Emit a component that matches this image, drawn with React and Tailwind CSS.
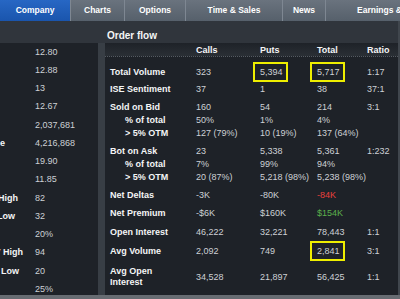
import React from 'react'

const tabs = [
  { name: 'Company', w: 'w-[70px] justify-center', active: true },
  { name: 'Charts', w: 'w-[54px] justify-center' },
  { name: 'Options', w: 'w-[61px] justify-center' },
  { name: 'Time & Sales', w: 'w-[97px] justify-center' },
  { name: 'News', w: 'w-[43px] justify-center' },
  { name: 'Earnings & Dividends', w: 'w-[160px] justify-start pl-[31px]' },
]

// left quote panel, labels are scrolled off to the left
const quote = [
  { label: '', value: '12.80' },
  { label: '', value: '12.88' },
  { label: '', value: '13' },
  { label: '', value: '12.67' },
  { label: '', value: '2,037,681' },
  { label: 'Avg Volume', pad: 'pr-[30px]', value: '4,216,868' },
  { label: '', value: '19.90' },
  { label: '', value: '11.85' },
  { label: '52 Wk High', pad: 'pr-[17px]', value: '82' },
  { label: '52 Wk Low', pad: 'pr-[20px]', value: '32' },
  { label: '', value: '20%' },
  { label: 'IV High', pad: 'pr-[12px]', value: '94' },
  { label: 'IV Low', pad: 'pr-[16px]', value: '20' },
  { label: '', value: '25%' },
]

const Box = ({ children }) => (
  <span className="inline-flex items-center h-[20px] w-[35px] -ml-[7px] pl-[5px] border-2 border-[#eeee00]">
    {children}
  </span>
)

const Row = ({ label, cells, sub, h = 'h-[18.25px]', color }) => (
  <div className={`grid grid-cols-[86px_64px_57px_50px_1fr] items-center ${h}`}>
    <div className={`font-bold text-[#f4f5f6] whitespace-nowrap ${sub ? 'pl-[15px]' : ''}`}>{label}</div>
    {cells.map((c, i) => (
      <div key={i} className={`whitespace-nowrap ${i === 2 && color ? color : 'text-[#cdd1d5]'}`}>{c}</div>
    ))}
  </div>
)

export default function App() {
  return (
    <div
      className="w-[400px] h-[299px] overflow-hidden flex flex-col bg-[#30353c] text-[9px] leading-[11px]"
      style={{ fontFamily: '"Liberation Sans", Arial, sans-serif' }}
    >
      {/* ================= TABS ================= */}
      <div className="h-[21px] flex shrink-0 overflow-hidden">
        {tabs.map(t => (
          <div
            key={t.name}
            className={`${t.w} shrink-0 h-full flex items-center font-bold text-[8.5px] whitespace-nowrap text-white ${
              t.active
                ? 'bg-gradient-to-b from-[#2767c4] to-[#1a55ad]'
                : 'bg-gradient-to-b from-[#6a737e] to-[#56606b] border-l border-[#7e8792] text-[#eef0f2]'
            }`}
          >
            {t.name}
          </div>
        ))}
      </div>

      <div className="flex-1 flex min-h-0">
        {/* ================= LEFT PANEL ================= */}
        <div className="w-[98px] shrink-0 mt-[22px] bg-[#1e2228] overflow-hidden">
          {quote.map((q, i) => (
            <div key={i} className="h-[18.25px] flex items-center">
              <div className="w-[35px] shrink-0 flex justify-end overflow-hidden">
                {q.label && <span className={`font-bold text-[#f4f5f6] whitespace-nowrap ${q.pad}`}>{q.label}</span>}
              </div>
              <span className="text-[#cdd1d5] whitespace-nowrap">{q.value}</span>
            </div>
          ))}
        </div>

        <div className="w-[7px] shrink-0 mt-[22px] bg-[#383e45]" />

        {/* ================= ORDER FLOW ================= */}
        <div className="flex-1 flex flex-col min-w-0">
          <div className="h-[22px] shrink-0 flex items-center pl-[2px] pt-[6px] font-bold text-[10px] text-[#f4f5f6]">Order flow</div>
          <div className="flex-1 bg-[#1e2228] pl-[5px] overflow-hidden">
            <div className="grid grid-cols-[86px_64px_57px_50px_1fr] h-[14px] pt-[2px] items-center font-bold text-[#f4f5f6] border-b border-dotted border-[#555b62] -ml-[5px] pl-[5px] bg-gradient-to-b from-[#1e2228] to-[#2a2f35]">
              <div />
              <div>Calls</div>
              <div>Puts</div>
              <div>Total</div>
              <div>Ratio</div>
            </div>
            <div className="pt-[5px]">
              <Row label="Total Volume" cells={['323', <Box>5,394</Box>, <Box>5,717</Box>, '1:17']} />
              <Row label="ISE Sentiment" cells={['37', '1', '38', '37:1']} />
              <div className="py-[2.5px]">
                <Row h="h-[13px]" label="Sold on Bid" cells={['160', '54', '214', '3:1']} />
                <Row h="h-[13px]" sub label="% of total" cells={['50%', '1%', '4%', '']} />
                <Row h="h-[13px]" sub label="> 5% OTM" cells={['127 (79%)', '10 (19%)', '137 (64%)', '']} />
              </div>
              <div className="py-[2.5px]">
                <Row h="h-[13px]" label="Bot on Ask" cells={['23', '5,338', '5,361', '1:232']} />
                <Row h="h-[13px]" sub label="% of total" cells={['7%', '99%', '94%', '']} />
                <Row h="h-[13px]" sub label="> 5% OTM" cells={['20 (87%)', '5,218 (98%)', '5,238 (98%)', '']} />
              </div>
              <Row label="Net Deltas" cells={['-3K', '-80K', '-84K', '']} color="text-[#e8403c]" />
              <Row label="Net Premium" cells={['-$6K', '$160K', '$154K', '']} color="text-[#5cb04c]" />
              <Row label="Open Interest" cells={['46,222', '32,221', '78,443', '1:1']} />
              <Row label="Avg Volume" cells={['2,092', '749', <Box>2,841</Box>, '3:1']} />
              <Row h="h-[32px] pt-[3px]" label={<span className="block leading-[11px]">Avg Open<br />Interest</span>} cells={['34,528', '21,897', '56,425', '1:1']} />
            </div>
          </div>
        </div>
        <div className="w-[2px] shrink-0 bg-[#40464d]" />
      </div>
      <div className="h-[4px] shrink-0 bg-[#676c72]" />
    </div>
  )
}
